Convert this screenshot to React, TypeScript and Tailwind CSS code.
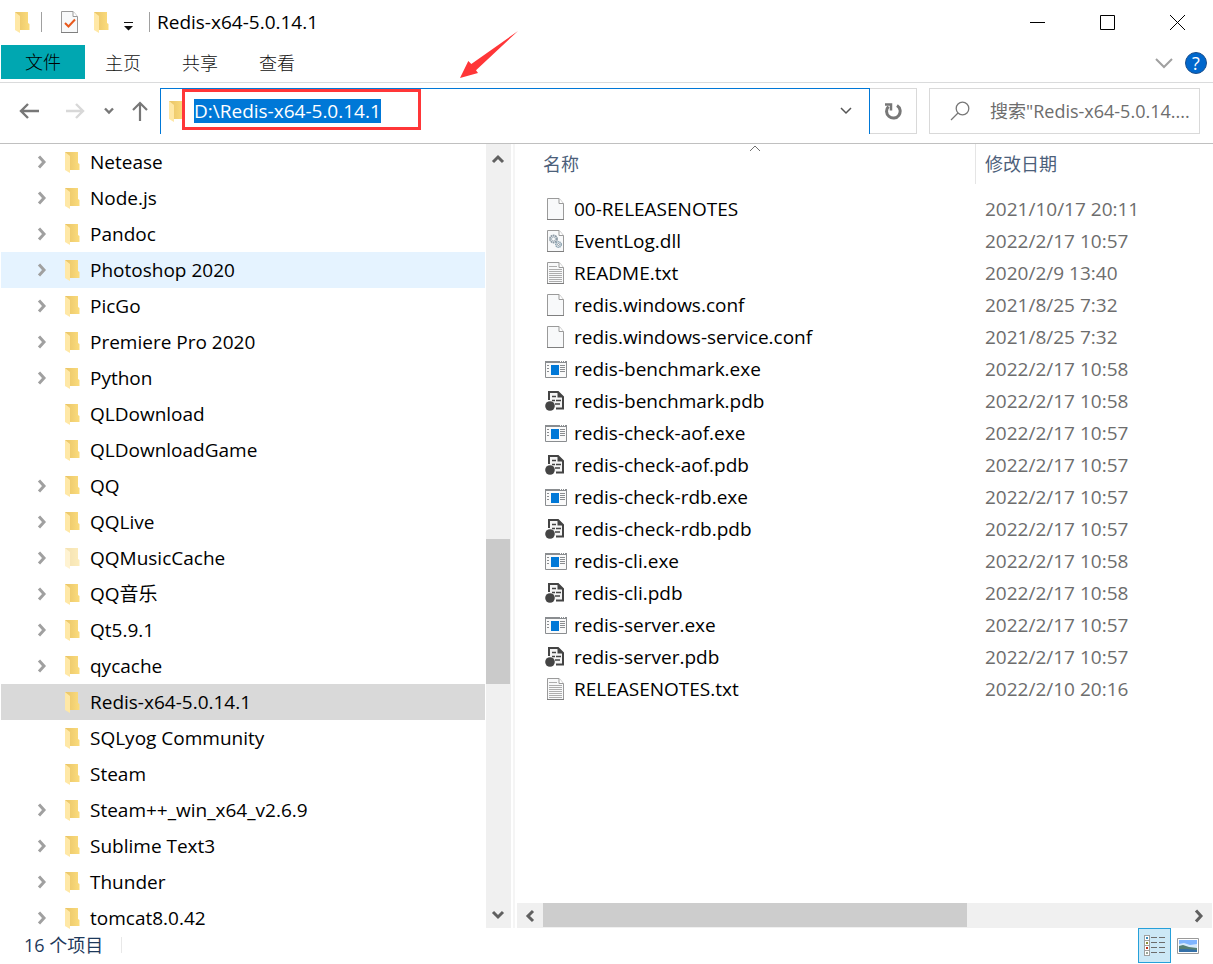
import React from 'react';

type FileKind = 'blank' | 'dll' | 'txt' | 'exe' | 'pdb';

interface FolderNode {
    name: string;
    expandable?: boolean;
    hovered?: boolean;
    selected?: boolean;
    hidden?: boolean;
}

interface FileEntry {
    name: string;
    kind: FileKind;
    modified: string;
}

const FOLDERS: FolderNode[] = [
    { name: 'Netease', expandable: true },
    { name: 'Node.js', expandable: true },
    { name: 'Pandoc', expandable: true },
    { name: 'Photoshop 2020', expandable: true, hovered: true },
    { name: 'PicGo', expandable: true },
    { name: 'Premiere Pro 2020', expandable: true },
    { name: 'Python', expandable: true },
    { name: 'QLDownload' },
    { name: 'QLDownloadGame' },
    { name: 'QQ', expandable: true },
    { name: 'QQLive', expandable: true },
    { name: 'QQMusicCache', expandable: true, hidden: true },
    { name: 'QQ音乐', expandable: true },
    { name: 'Qt5.9.1', expandable: true },
    { name: 'qycache', expandable: true },
    { name: 'Redis-x64-5.0.14.1', selected: true },
    { name: 'SQLyog Community' },
    { name: 'Steam' },
    { name: 'Steam++_win_x64_v2.6.9', expandable: true },
    { name: 'Sublime Text3', expandable: true },
    { name: 'Thunder', expandable: true },
    { name: 'tomcat8.0.42', expandable: true },
];

const FILES: FileEntry[] = [
    { name: '00-RELEASENOTES', kind: 'blank', modified: '2021/10/17 20:11' },
    { name: 'EventLog.dll', kind: 'dll', modified: '2022/2/17 10:57' },
    { name: 'README.txt', kind: 'txt', modified: '2020/2/9 13:40' },
    { name: 'redis.windows.conf', kind: 'blank', modified: '2021/8/25 7:32' },
    { name: 'redis.windows-service.conf', kind: 'blank', modified: '2021/8/25 7:32' },
    { name: 'redis-benchmark.exe', kind: 'exe', modified: '2022/2/17 10:58' },
    { name: 'redis-benchmark.pdb', kind: 'pdb', modified: '2022/2/17 10:58' },
    { name: 'redis-check-aof.exe', kind: 'exe', modified: '2022/2/17 10:57' },
    { name: 'redis-check-aof.pdb', kind: 'pdb', modified: '2022/2/17 10:57' },
    { name: 'redis-check-rdb.exe', kind: 'exe', modified: '2022/2/17 10:57' },
    { name: 'redis-check-rdb.pdb', kind: 'pdb', modified: '2022/2/17 10:57' },
    { name: 'redis-cli.exe', kind: 'exe', modified: '2022/2/17 10:58' },
    { name: 'redis-cli.pdb', kind: 'pdb', modified: '2022/2/17 10:58' },
    { name: 'redis-server.exe', kind: 'exe', modified: '2022/2/17 10:57' },
    { name: 'redis-server.pdb', kind: 'pdb', modified: '2022/2/17 10:57' },
    { name: 'RELEASENOTES.txt', kind: 'txt', modified: '2022/2/10 20:16' },
];

const FolderIcon = ({ faded = false }: { faded?: boolean }) => (
    <svg width="15" height="22" viewBox="0 0 15 22" className={`shrink-0 ${faded ? 'opacity-50' : ''}`}>
        <defs>
            <linearGradient id="folderBack" x1="0" x2="1" y1="0" y2="0">
                <stop offset="0" stopColor="#e9c467" />
                <stop offset="1" stopColor="#fbdc7d" />
            </linearGradient>
        </defs>
        <path d="M0 1H13V12L14.500 13V19H0Z" fill="url(#folderBack)" />
        <path d="M0 1L5 5V22L0 19Z" fill="#ffe8a6" />
    </svg>
);

const Page = () => (
    <>
        <path d="M2.500 .5H14L18.500 5.500V21.500H2.500Z" fill="#f8f9fa" stroke="#9a9a9a" />
        <path d="M2 21.500H19" stroke="#7f7f7f" />
        <path d="M14 .5V5.500H18.500" fill="#fff" stroke="#9a9a9a" />
    </>
);

const FileIcon = ({ kind }: { kind: FileKind }) => (
    <svg width="22" height="22" viewBox="0 0 22 22" fill="none" className="shrink-0">
        {kind === 'blank' && <Page />}
        {kind === 'txt' && (
            <>
                <Page />
                <path d="M4 4.500H12M4 7.500H17M4 9.500H17M4 11.500H17M4 13.500H17M4 15.500H17M4 17.500H17M4 19.500H17" stroke="#adadad" />
            </>
        )}
        {kind === 'dll' && (
            <>
                <Page />
                <circle cx="8.500" cy="9" r="3.500" stroke="#8c9aa5" strokeWidth="1.800" strokeDasharray="1.700 .5" />
                <circle cx="8.500" cy="9" r="2" stroke="#a9b6bf" />
                <circle cx="13.500" cy="14.500" r="2.700" stroke="#8fa5b3" strokeWidth="1.600" strokeDasharray="1.400 .5" />
                <circle cx="13.500" cy="14.500" r="1" stroke="#8c9aa5" />
            </>
        )}
        {kind === 'exe' && (
            <>
                <path d="M.5 3.500H21.500V19.500H.5Z" fill="#fafafa" stroke="#8a8d90" />
                <path d="M0 4H22" stroke="#8a8d90" strokeWidth="2" />
                <path d="M15 3.500H16M17 3.500H18M19 3.500H20" stroke="#fff" />
                <path d="M6 7H14V17H6Z" fill="#0078d7" />
                <path d="M2 7.500H4M2 10.500H4M2 13.500H4M15 7.500H20M15 9.500H20M15 11.500H20M15 13.500H20" stroke="#8a8d90" />
            </>
        )}
        {kind === 'pdb' && (
            <>
                <path d="M4 10V2H13L18 7V18.500H11" fill="#f4f4f4" stroke="#444" strokeWidth="2" />
                <path d="M12.500 1.500V7.500H18.500Z" fill="#444" />
                <path d="M7 6.500H11M7 10.500H10M11 10.500H16M10 14H15" stroke="#444" strokeWidth="1.500" />
                <circle cx="5" cy="16" r="4.800" fill="#444" />
            </>
        )}
    </svg>
);

const Chevron = ({ d }: { d: 'up' | 'down' | 'left' | 'right' }) => {
    const paths = {
        up: 'M2 10L7 5L12 10',
        down: 'M2 4L7 9L12 4',
        left: 'M10 2L5 7L10 12',
        right: 'M4 1.500L9 7L4 12.500',
    };
    return (
        <svg width="14" height="14" viewBox="0 0 14 14" fill="none" stroke="currentColor" strokeWidth="3">
            <path d={paths[d]} />
        </svg>
    );
};

const TitleBar = () => (
    <header className="flex h-[45px] shrink-0 items-center pb-px pl-[15px]">
        <FolderIcon />
        <span className="ml-[11px] h-5 w-px bg-[#a0a0a0]" />
        <button aria-label="属性" className="ml-[17px]">
            <svg width="22" height="22" viewBox="0 0 22 22" fill="none">
                <Page />
                <path d="M6 12L9.500 15.500L16 8.500" stroke="#e8591c" strokeWidth="2" />
            </svg>
        </button>
        <button aria-label="新建文件夹" className="ml-[13px]">
            <FolderIcon />
        </button>
        <button aria-label="自定义快速访问工具栏" className="ml-3.5">
            <svg width="11" height="22" viewBox="0 0 11 22">
                <path d="M1 11H10V12H1ZM1 15H10L5.500 19.500Z" fill="#111" />
            </svg>
        </button>
        <span className="ml-[15px] h-5 w-px bg-[#a0a0a0]" />
        <h1 className="ml-[7px] text-[19px] leading-6">Redis-x64-5.0.14.1</h1>
        <div className="mr-px ml-auto flex h-full">
            <button aria-label="最小化" className="flex w-[70px] items-center justify-center">
                <svg width="15" height="15" viewBox="0 0 15 15"><path d="M0 7.500H15" stroke="#000" /></svg>
            </button>
            <button aria-label="最大化" className="flex w-[70px] items-center justify-center">
                <svg width="15" height="15" viewBox="0 0 15 15"><path d="M.5 .5H14.500V14.500H.5Z" fill="none" stroke="#000" /></svg>
            </button>
            <button aria-label="关闭" className="flex w-[70px] items-center justify-center">
                <svg width="15" height="15" viewBox="0 0 15 15"><path d="M0 0L15 15M15 0L0 15" stroke="#000" /></svg>
            </button>
        </div>
    </header>
);

const RibbonTabs = () => (
    <nav className="flex h-[38px] shrink-0 items-start border-b border-[#dadbdc] pr-1.5 pl-px text-[18px] leading-6 font-light text-[#111]">
        <button className="h-[34px] bg-[#00a7b1] px-6 text-black">文件</button>
        <div className="flex h-[36px] items-center gap-px">
            {['主页', '共享', '查看'].map((tab) => (
                <button key={tab} className="px-5">{tab}</button>
            ))}
        </div>
        <div className="ml-auto flex h-[36px] items-center gap-3">
            <button aria-label="展开功能区">
                <svg width="18" height="12" viewBox="0 0 18 12" fill="none" stroke="#a0a0a0" strokeWidth="2">
                    <path d="M1 2L9 10L17 2" />
                </svg>
            </button>
            <button aria-label="帮助" className="flex size-[22px] items-center justify-center rounded-full border border-[#1c4f8c] bg-[#0067cc] text-[18px] leading-5 font-normal text-white">
                ?
            </button>
        </div>
    </nav>
);

const AddressBar = () => (
    <div className="flex h-[61px] shrink-0 items-start border-b border-[#c0c0c0] pt-[5px] pr-[13px]">
        <div className="flex h-[46px] w-40 shrink-0 items-center pl-[19px]">
            <button aria-label="后退">
                <svg width="20" height="16" viewBox="0 0 20 16" fill="none" stroke="#777" strokeWidth="2.400">
                    <path d="M9 1L2 8L9 15M2 8H20" />
                </svg>
            </button>
            <button aria-label="前进" className="ml-[26px]">
                <svg width="20" height="16" viewBox="0 0 20 16" fill="none" stroke="#d8d8d8" strokeWidth="2.400">
                    <path d="M11 1L18 8L11 15M18 8H1" />
                </svg>
            </button>
            <button aria-label="最近浏览的位置" className="ml-[19px]">
                <svg width="10" height="8" viewBox="0 0 10 8" fill="none" stroke="#777" strokeWidth="2.400">
                    <path d="M1 1.500L5 5.500L9 1.500" />
                </svg>
            </button>
            <button aria-label="上移" className="ml-[18px]">
                <svg width="16" height="20" viewBox="0 0 16 20" fill="none" stroke="#777" strokeWidth="2.200">
                    <path d="M1 9L8 2L15 9M8 2V20" />
                </svg>
            </button>
        </div>

        <div className="relative flex h-[46px] min-w-0 flex-1 items-center border-x border-t border-[#0078d7] pb-px pl-2">
            <FolderIcon />
            <input
                type="text"
                aria-label="地址"
                defaultValue="D:\Redis-x64-5.0.14.1"
                className="ml-2.5 h-6 field-sizing-content bg-[#0078d7] text-[19px] leading-6 text-white outline-none"
            />
            <button aria-label="历史记录" className="mr-[17px] ml-auto">
                <svg width="12" height="8" viewBox="0 0 12 8" fill="none" stroke="#555" strokeWidth="1.500">
                    <path d="M1 1L6 6L11 1" />
                </svg>
            </button>

            {/* Annotation */}
            <div className="pointer-events-none absolute top-0 left-[21px] h-[41px] w-[239px] border-3 border-[#ff3638]" />
            <svg width="60" height="50" viewBox="0 0 60 50" className="pointer-events-none absolute -top-[59px] left-[298px]">
                <path d="M1 48L9.300 31L12.300 34L59 1L17 40.300L19 43Z" fill="#ff3638" />
            </svg>
        </div>

        <button aria-label="刷新" className="flex h-[46px] w-[47px] shrink-0 items-center justify-center border-y border-r border-[#d9d9d9]">
            <svg width="18" height="18" viewBox="0 0 18 18" fill="none" stroke="#777" strokeWidth="3">
                <path d="M4.500 4.500A6.800 6.800 0 1 0 13 3.500" />
                <path d="M1 2.500H7V8.500" strokeWidth="2.500" />
            </svg>
        </button>

        <label className="ml-3 flex h-[46px] w-[271px] shrink-0 items-center border border-[#d9d9d9] pl-5">
            <svg width="20" height="20" viewBox="0 0 20 20" fill="none" stroke="#777" strokeWidth="1.300">
                <circle cx="12.500" cy="7.500" r="6.300" />
                <path d="M8 12L1 19" />
            </svg>
            <input
                type="text"
                aria-label="搜索"
                placeholder={'搜索"Redis-x64-5.0.14....'}
                className="ml-5 min-w-0 flex-1 text-[18px] leading-6 outline-none placeholder:text-[#6d6d6d]"
            />
        </label>
    </div>
);

const FolderTree = () => (
    <aside className="flex w-[511px] shrink-0">
        <ul className="min-w-0 flex-1 pr-px pl-px">
            {FOLDERS.map((folder) => (
                <li
                    key={folder.name}
                    className={`flex h-9 items-center pl-[34px] ${folder.selected ? 'bg-[#d9d9d9]' : folder.hovered ? 'bg-[#e5f3ff]' : ''}`}
                >
                    <span className="flex w-[30px] shrink-0">
                        {folder.expandable && (
                            <button aria-label={`展开 ${folder.name}`} className="text-[#a0a0a0]">
                                <Chevron d="right" />
                            </button>
                        )}
                    </span>
                    <FolderIcon faded={folder.hidden} />
                    <span className="ml-2.5 text-[19px] leading-5">{folder.name}</span>
                </li>
            ))}
        </ul>
        <div className="flex w-[25px] flex-col items-center bg-[#f0f0f0] pr-px text-[#606060]">
            <button aria-label="向上滚动" className="flex h-[30px] shrink-0 items-center"><Chevron d="up" /></button>
            <span className="grow-[365]" />
            <span className="h-[145px] w-6 bg-[#cacaca]" />
            <span className="grow-[218]" />
            <button aria-label="向下滚动" className="flex h-[26px] shrink-0 items-center"><Chevron d="down" /></button>
        </div>
    </aside>
);

const FileList = () => (
    <main className="flex min-w-0 flex-1 flex-col">
        <div className="min-h-0 flex-1 overflow-hidden">
            <table className="w-full table-fixed text-left text-[19px] leading-6">
                <thead className="text-[18px] text-[#4c607a]">
                    <tr className="h-[49px] align-top">
                        <th className="relative w-[459px] pl-[26px] font-normal">
                            <div className="flex h-10 items-center border-r border-[#e5e5e5]">名称</div>
                            <svg width="12" height="7" viewBox="0 0 12 7" fill="none" stroke="#707070" className="absolute top-[1px] left-[232px]">
                                <path d="M1 6L6 1L11 6" />
                            </svg>
                        </th>
                        <th className="pl-[9px] font-normal">
                            <div className="flex h-10 items-center">修改日期</div>
                        </th>
                    </tr>
                </thead>
                <tbody>
                    {FILES.map((file) => (
                        <tr key={file.name} className="h-8">
                            <td className="pl-7">
                                <div className="flex items-center gap-[7px]">
                                    <FileIcon kind={file.kind} />
                                    {file.name}
                                </div>
                            </td>
                            <td className="pl-[9px] text-[#6d6d6d]">{file.modified}</td>
                        </tr>
                    ))}
                </tbody>
            </table>
        </div>
        <div className="mr-px flex h-[25px] shrink-0 items-center bg-[#f0f0f0] text-[#606060]">
            <button aria-label="向左滚动" className="flex w-[26px] justify-center"><Chevron d="left" /></button>
            <span className="mb-px h-6 grow-[424] bg-[#cdcdcd]" />
            <span className="grow-[219]" />
            <button aria-label="向右滚动" className="flex w-[26px] justify-center"><Chevron d="right" /></button>
        </div>
    </main>
);

const StatusBar = () => (
    <footer className="flex h-9 shrink-0 items-start pr-3.5 pl-6 text-[18px] text-[#1e395b]">
        <div className="flex h-[34px] items-center">
            <span className="leading-6">16 个项目</span>
            <span className="ml-[18px] h-4 w-px bg-[#e8e8e8]" />
        </div>
        <div className="ml-auto flex items-center gap-1.5">
            <button aria-label="详细信息" className="flex h-[35px] w-[33px] items-center justify-center border border-[#26a0da] bg-[#cce8f6]">
                <svg width="21" height="21" viewBox="0 0 21 21" fill="none">
                    {[0, 5, 10, 15].map((y, i) => (
                        <g key={y}>
                            <rect x=".5" y={y + 0.5} width="5" height="5" fill="#fff" stroke="#a0a0a0" />
                            <rect x="2" y={y + 2} width="2" height="2" fill={['#3c8dbc', '#8a8f3a', '#c0301c', '#9aa89a'][i]} />
                            <path d={`M7 ${y + 2.5}H13M15 ${y + 2.5}H21`} stroke="#6d6d6d" />
                        </g>
                    ))}
                </svg>
            </button>
            <button aria-label="大图标">
                <svg width="22" height="16" viewBox="0 0 22 16">
                    <path d="M.5 .5H21.500V15.500H.5Z" fill="#fff" stroke="#9a9a9a" />
                    <path d="M2 2H20V14H2Z" fill="#7fb5ff" />
                    <path d="M2 6L7 5L13 7L20 6V10H2Z" fill="#d5e9fb" />
                    <path d="M2 8L6 7L12 9L20 10V12H2Z" fill="#557f74" />
                    <path d="M2 11L10 11L20 12V14H2Z" fill="#3470a8" />
                </svg>
            </button>
        </div>
    </footer>
);

export default function App() {
    return (
        <div className="flex h-screen flex-col overflow-hidden bg-white font-['Open_Sans','Noto_Sans_CJK_SC',sans-serif] text-black">
            <TitleBar />
            <RibbonTabs />
            <AddressBar />
            <div className="flex min-h-0 flex-1">
                <FolderTree />
                <span className="mx-0.5 w-0.5 shrink-0 bg-[#f5f5f5]" />
                <FileList />
            </div>
            <StatusBar />
        </div>
    );
}
